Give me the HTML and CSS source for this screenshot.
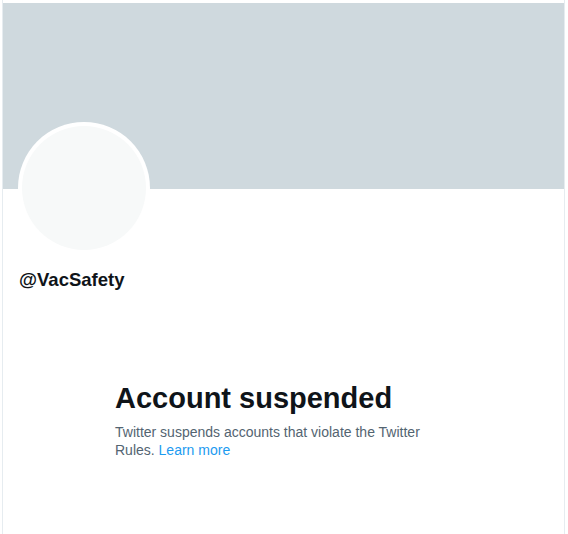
FILE: index.html
```html
<!DOCTYPE html>
<html>
<head>
<meta charset="utf-8">
<link rel="stylesheet" href="styles.css">
</head>
<body>
<div class="page">
  <div class="banner"></div>
  <div class="profile">
    <div class="avatar"><div class="avatar-inner"></div></div>
    <div class="handle">@VacSafety</div>
  </div>
  <div class="notice">
    <h1 class="title">Account suspended</h1>
    <p class="desc">Twitter suspends accounts that violate the Twitter Rules. <a class="link" href="#">Learn more</a></p>
  </div>
</div>
</body>
</html>
```
FILE: styles.css
```css
html, body {
  margin: 0;
  padding: 0;
  background: #ffffff;
}
body {
  font-family: "Liberation Sans", Arial, sans-serif;
  color: #0f1419;
}
.page {
  margin-left: 2px;
  width: 563px;
  height: 534px;
  padding-top: 3px;
  box-sizing: border-box;
  border-left: 1px solid #e6ecf0;
  border-right: 1px solid #e6ecf0;
}
.banner {
  height: 186px;
  background: #cfd9de;
}
.profile {
  position: relative;
  padding: 0 16px;
}
.avatar {
  width: 132px;
  height: 132px;
  margin-top: -67px;
  margin-left: -1px;
  border-radius: 50%;
  background: #ffffff;
  display: flex;
  align-items: center;
  justify-content: center;
  position: relative;
}
.avatar-inner {
  width: 124px;
  height: 124px;
  border-radius: 50%;
  background: #f7f9f9;
}
.handle {
  margin-top: 15px;
  font-size: 18.5px;
  font-weight: bold;
  line-height: 22px;
}
.notice {
  padding-left: 112px;
  margin-top: 90px;
  width: 330px;
}
.title {
  margin: 0;
  font-size: 29px;
  font-weight: bold;
  line-height: 34px;
}
.desc {
  margin: 8px 0 0 0;
  font-size: 14px;
  line-height: 18px;
  color: #536471;
}
.link {
  color: #1d9bf0;
  text-decoration: none;
}
```
